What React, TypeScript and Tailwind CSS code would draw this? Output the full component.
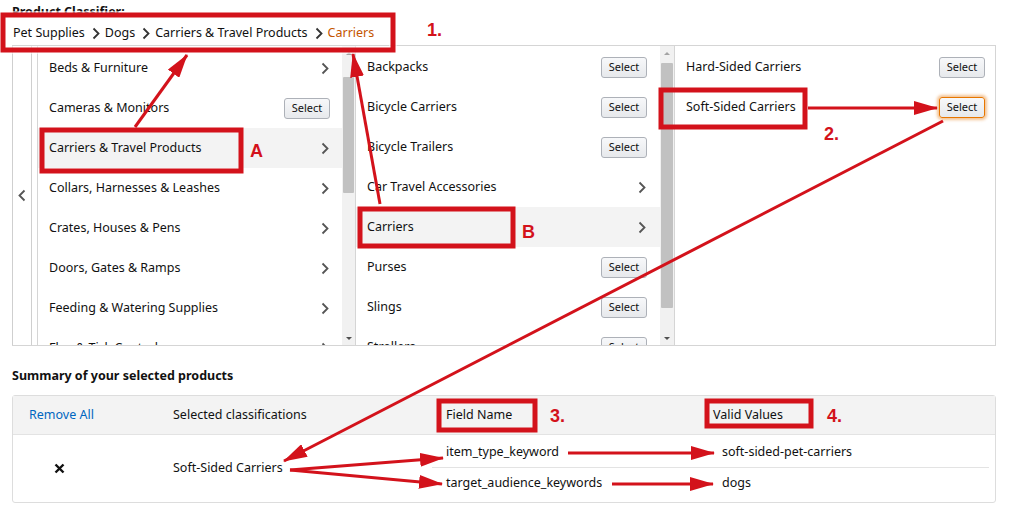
import React from 'react';

const RED = '#d3121b';

type Row = { label: string; action: 'select' | 'next' | 'focus'; active?: boolean };

const COL1: Row[] = [
  { label: 'Beds & Furniture', action: 'next' },
  { label: 'Cameras & Monitors', action: 'select' },
  { label: 'Carriers & Travel Products', action: 'next', active: true },
  { label: 'Collars, Harnesses & Leashes', action: 'next' },
  { label: 'Crates, Houses & Pens', action: 'next' },
  { label: 'Doors, Gates & Ramps', action: 'next' },
  { label: 'Feeding & Watering Supplies', action: 'next' },
  { label: 'Flea & Tick Control', action: 'next' },
];

const COL2: Row[] = [
  { label: 'Backpacks', action: 'select' },
  { label: 'Bicycle Carriers', action: 'select' },
  { label: 'Bicycle Trailers', action: 'select' },
  { label: 'Car Travel Accessories', action: 'next' },
  { label: 'Carriers', action: 'next', active: true },
  { label: 'Purses', action: 'select' },
  { label: 'Slings', action: 'select' },
  { label: 'Strollers', action: 'select' },
];

const COL3: Row[] = [
  { label: 'Hard-Sided Carriers', action: 'select' },
  { label: 'Soft-Sided Carriers', action: 'focus' },
];

function ChevronRight({ className = '' }: { className?: string }) {
  return (
    <svg width="8" height="13" viewBox="0 0 8 13" className={className}>
      <polyline points="1.5,1.5 6.5,6.5 1.5,11.5" fill="none" stroke="currentColor" strokeWidth="1.8" />
    </svg>
  );
}

function SelectButton({ focus = false }: { focus?: boolean }) {
  return (
    <button
      className={
        focus
          ? 'h-[21px] w-[46px] rounded-[3px] border border-[#e77600] bg-gradient-to-b from-[#f7f8fa] to-[#e7e9ec] text-[11px] text-[#111] shadow-[0_0_3px_2px_rgba(228,121,17,0.45)]'
          : 'h-[21px] w-[46px] rounded-[3px] border border-[#adb1b8] bg-gradient-to-b from-[#f7f8fa] to-[#e7e9ec] text-[11px] text-[#111]'
      }
    >
      Select
    </button>
  );
}

function ListRow({ row, pl, pr }: { row: Row; pl: string; pr: string }) {
  return (
    <div
      className={`flex h-[40px] shrink-0 items-center justify-between ${pl} ${pr} ${row.active ? 'bg-[#f3f3f3]' : ''}`}
    >
      <span className="text-[12.5px] text-[#111]">{row.label}</span>
      {row.action === 'next' ? (
        <ChevronRight className="mr-[1px] text-[#555]" />
      ) : (
        <SelectButton focus={row.action === 'focus'} />
      )}
    </div>
  );
}

function Scrollbar({ width, thumb }: { width: string; thumb: string }) {
  return (
    <div className={`flex ${width} shrink-0 flex-col bg-[#f1f1f1]`}>
      <div className="flex h-[14px] shrink-0 items-center justify-center">
        <div className="h-0 w-0 border-x-[3px] border-b-[3px] border-x-transparent border-b-[#a3a3a3]" />
      </div>
      <div className="flex-1">
        <div className={`mx-[1px] rounded-[1px] bg-[#c1c1c1] ${thumb}`} />
      </div>
      <div className="flex h-[14px] shrink-0 items-center justify-center">
        <div className="h-0 w-0 border-x-[3px] border-t-[3px] border-x-transparent border-t-[#505050]" />
      </div>
    </div>
  );
}

function Crumb({ children, last = false }: { children: React.ReactNode; last?: boolean }) {
  return <span className={last ? 'text-[#c45500]' : 'text-[#111]'}>{children}</span>;
}

function CrumbSep() {
  return <ChevronRight className="ml-[7px] mr-[5px] text-[#333]" />;
}

function Annotations() {
  const box = { fill: 'none', stroke: RED, strokeWidth: 5 };
  const line = { stroke: RED, strokeWidth: 3, markerEnd: 'url(#head)' };
  const label = { fill: RED, fontSize: 18, fontWeight: 900, fontFamily: "'Liberation Sans', Arial, sans-serif" };
  return (
    <svg className="pointer-events-none absolute inset-0" width="1009" height="511" viewBox="0 0 1009 511">
      <defs>
        <marker id="head" markerUnits="userSpaceOnUse" markerWidth="24" markerHeight="14" refX="23" refY="7" orient="auto">
          <path d="M0,0 L24,7 L0,14 z" fill={RED} />
        </marker>
      </defs>
      <rect x="3" y="15" width="390" height="35" fill="none" stroke="#fff" strokeOpacity="0.55" strokeWidth="8" />
      <rect x="3" y="15" width="390" height="35" {...box} />
      <rect x="42" y="130" width="199" height="41" {...box} />
      <rect x="360" y="209" width="153" height="37" {...box} />
      <rect x="661" y="90" width="144" height="37" {...box} />
      <rect x="439" y="401" width="96" height="29" {...box} />
      <rect x="707" y="401" width="104" height="25" {...box} />

      <line x1="135" y1="127" x2="187" y2="55" {...line} />
      <line x1="380" y1="204" x2="353" y2="54" {...line} />
      <line x1="808" y1="108" x2="937" y2="108" {...line} />
      <line x1="943" y1="121" x2="284" y2="461" {...line} />
      <line x1="290" y1="470" x2="443" y2="458" {...line} />
      <line x1="290" y1="470" x2="442" y2="484" {...line} />
      <line x1="568" y1="453" x2="714" y2="453" {...line} />
      <line x1="612" y1="484" x2="713" y2="484" {...line} />

      <text x="427" y="36" {...label}>1.</text>
      <text x="250" y="157" {...label}>A</text>
      <text x="522" y="238" {...label}>B</text>
      <text x="824" y="140" {...label}>2.</text>
      <text x="550" y="422" {...label}>3.</text>
      <text x="827" y="422" {...label}>4.</text>
    </svg>
  );
}

export default function App() {
  return (
    <div className="relative h-[511px] w-[1009px] overflow-hidden bg-white font-['Noto_Sans',sans-serif] text-[#111]">
      <div className="pl-[12px] pr-[13px]">
        <div className="h-[21px] pt-[3px] text-[12.5px] font-bold leading-[18px]">Product Classifier:</div>
        <div className="flex h-[24px] items-center pl-[1px] pt-[1px] text-[12.5px]">
          <Crumb>Pet Supplies</Crumb>
          <CrumbSep />
          <Crumb>Dogs</Crumb>
          <CrumbSep />
          <Crumb>Carriers &amp; Travel Products</Crumb>
          <CrumbSep />
          <Crumb last>Carriers</Crumb>
        </div>

        {/* classifier columns */}
        <div className="flex h-[301px] border-y border-[#d5d5d5]">
          <div className="flex w-[20px] shrink-0 items-center justify-center border-x border-[#cfcfcf]">
            <ChevronRight className="rotate-180 text-[#555]" />
          </div>
          <div className="w-[5px] shrink-0" />
          <div className="flex w-[319px] shrink-0 border-x border-[#d5d5d5]">
            <div className="flex w-[304px] flex-col overflow-hidden pt-[2px]">
              {COL1.map((r) => (
                <ListRow key={r.label} row={r} pl="pl-[11px]" pr="pr-[12px]" />
              ))}
            </div>
            <Scrollbar width="w-[13px]" thumb="mt-[17px] h-[116px]" />
          </div>
          <div className="flex w-[319px] shrink-0 border-r border-[#d5d5d5]">
            <div className="flex w-[304px] flex-col overflow-hidden pt-[1px]">
              {COL2.map((r) => (
                <ListRow key={r.label} row={r} pl="pl-[11px]" pr="pr-[13px]" />
              ))}
            </div>
            <Scrollbar width="w-[14px]" thumb="mt-[3px] h-[245px]" />
          </div>
          <div className="flex flex-1 flex-col border-r border-[#d5d5d5] pt-[1px]">
            {COL3.map((r) => (
              <ListRow key={r.label} row={r} pl="pl-[11px]" pr="pr-[10px]" />
            ))}
          </div>
        </div>

        {/* summary */}
        <div className="mt-[20px] h-[20px] text-[12.5px] font-bold leading-[20px]">Summary of your selected products</div>
        <div className="mt-[9px] rounded-[3px] border border-[#dddddd] text-[12.5px]">
          <div className="flex h-[39px] items-center border-b border-[#e3e3e3] bg-[#f3f3f3]">
            <div className="w-[147px] shrink-0 pl-[16px] text-[#0066c0]">Remove All</div>
            <div className="w-[272px] shrink-0 pl-[13px]">Selected classifications</div>
            <div className="w-[268px] shrink-0 pl-[14px]">Field Name</div>
            <div className="pl-[13px]">Valid Values</div>
          </div>
          <div className="flex pb-[4px] pt-[3px]">
            <div className="flex w-[147px] shrink-0 items-center pl-[41px]">
              <svg width="11" height="11" viewBox="0 0 11 11">
                <path d="M1.5,1.5 L9.5,9.5 M9.5,1.5 L1.5,9.5" stroke="#111" strokeWidth="2.4" />
              </svg>
            </div>
            <div className="flex w-[272px] shrink-0 items-center pl-[13px]">Soft-Sided Carriers</div>
            <div className="mr-[6px] flex flex-1 flex-col">
              <div className="flex h-[30px] items-center border-b border-[#e3e3e3]">
                <div className="w-[268px] shrink-0 pl-[14px]">item_type_keyword</div>
                <div className="pl-[22px]">soft-sided-pet-carriers</div>
              </div>
              <div className="flex h-[30px] items-center">
                <div className="w-[268px] shrink-0 pl-[14px]">target_audience_keywords</div>
                <div className="pl-[22px]">dogs</div>
              </div>
            </div>
          </div>
        </div>
      </div>
      <Annotations />
    </div>
  );
}
